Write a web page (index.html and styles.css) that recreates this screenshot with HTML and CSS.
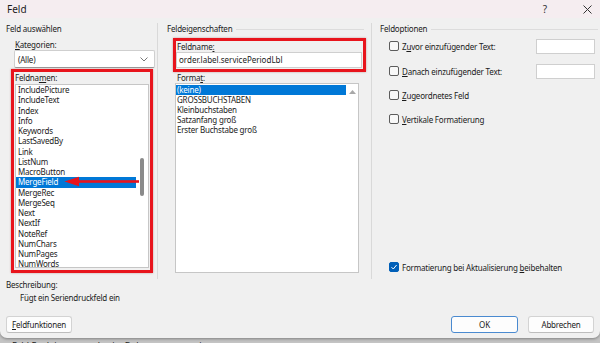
FILE: index.html
```html
<!DOCTYPE html>
<html lang="de">
<head>
  <meta charset="UTF-8" />
  <title>Feld</title>
  <link rel="stylesheet" href="styles.css">
</head>
<body>

  <div class="dialog">
    <!-- title bar -->
    <div class="titlebar">
      <span class="title">Feld</span>
      <span class="help">?</span>
      <span class="close">
        <svg width="9" height="9" viewBox="0 0 9 9"><path d="M0.5 0.5 L8.5 8.5 M8.5 0.5 L0.5 8.5" stroke="#333" stroke-width="1"/></svg>
      </span>
    </div>

    <div class="panes">
      <!-- left: Feld auswaehlen -->
      <section class="pane pane-select">
        <div class="group-title">Feld auswählen</div>
        <div class="label cat-label"><u>K</u>ategorien:</div>
        <div class="combo">
          <span>(Alle)</span>
          <svg width="8" height="5" viewBox="0 0 8 5"><path d="M0.5 0.5 L4 4 L7.5 0.5" fill="none" stroke="#777" stroke-width="1"/></svg>
        </div>
        <div class="red-box names-box">
          <div class="label">Feldna<u>m</u>en:</div>
          <div class="list names-list">
            <ul class="items">
              <li>IncludePicture</li>
              <li>IncludeText</li>
              <li>Index</li>
              <li>Info</li>
              <li>Keywords</li>
              <li>LastSavedBy</li>
              <li>Link</li>
              <li>ListNum</li>
              <li>MacroButton</li>
              <li class="selected">MergeField</li>
              <li>MergeRec</li>
              <li>MergeSeq</li>
              <li>Next</li>
              <li>NextIf</li>
              <li>NoteRef</li>
              <li>NumChars</li>
              <li>NumPages</li>
              <li>NumWords</li>
            </ul>
            <div class="scroll"><div class="thumb"></div></div>
          </div>
          <!-- red pointer arrow drawn over the list -->
          <svg class="pointer" width="76" height="11" viewBox="0 0 76 11">
            <rect x="13" y="4.2" width="62" height="2.6" fill="#e8141c"/>
            <path d="M0.5 5.5 L15 0.8 L15 10.2 Z" fill="#e8141c"/>
          </svg>
        </div>
      </section>

      <!-- middle: Feldeigenschaften -->
      <section class="pane pane-props">
        <div class="group-title">Feldeigenschaften</div>
        <div class="red-box name-box">
          <div class="label">Feldname<u>:</u></div>
          <div class="textbox">order.label.servicePeriodLbl</div>
        </div>
        <div class="label format-label">Forma<u>t</u>:</div>
        <div class="list format-list">
          <ul class="items">
            <li class="selected">(keine)</li>
            <li>GROSSBUCHSTABEN</li>
            <li>Kleinbuchstaben</li>
            <li>Satzanfang groß</li>
            <li>Erster Buchstabe groß</li>
          </ul>
          <div class="scroll">
            <svg width="7" height="4" viewBox="0 0 7 4"><path d="M0 4 L3.5 0 L7 4 Z" fill="#a8a8a8"/></svg>
          </div>
        </div>
      </section>

      <!-- right: Feldoptionen -->
      <section class="pane pane-options">
        <div class="group-title">Feldoptionen</div>
        <div class="option row-1">
          <span class="check"></span>
          <span>Z<u>u</u>vor einzufügender Text:</span>
          <span class="small-input"></span>
        </div>
        <div class="option row-2">
          <span class="check"></span>
          <span><u>D</u>anach einzufügender Text:</span>
          <span class="small-input"></span>
        </div>
        <div class="option row-3">
          <span class="check"></span>
          <span><u>Z</u>ugeordnetes Feld</span>
        </div>
        <div class="option row-4">
          <span class="check"></span>
          <span><u>V</u>ertikale Formatierung</span>
        </div>
        <div class="option row-keep">
          <span class="check checked">
            <svg width="8" height="8" viewBox="0 0 8 8"><path d="M1.5 4.2 L3.3 6 L6.6 2" fill="none" stroke="#fff" stroke-width="1"/></svg>
          </span>
          <span>Formatierung bei Aktualisierung <u>b</u>eibehalten</span>
        </div>
      </section>
    </div>

    <div class="description">
      <div class="label">Beschreibung:</div>
      <div class="desc-text">Fügt ein Seriendruckfeld ein</div>
    </div>

    <div class="buttons">
      <button class="btn btn-codes"><u>F</u>eldfunktionen</button>
      <span class="spacer"></span>
      <button class="btn btn-ok">OK</button>
      <button class="btn">Abbrechen</button>
    </div>
  </div>

  <div class="below">Feld-Funktionen werden im Dokument angezeigt</div>

</body>
</html>
```

FILE: styles.css
```css
body {
  margin: 0;
  width: 600px;
  height: 343px;
  overflow: hidden;
  background-color: #c4c4c4;
  font-family: 'Noto Sans', sans-serif;
  font-size: 8px;
  letter-spacing: -0.2px;
  color: #1b1b1b;
}

ul {
  margin: 0;
  padding: 0;
  list-style: none;
}

u {
  text-decoration-thickness: 1px;
  text-underline-offset: 1px;
}

.dialog {
  height: 338px;
  background-color: #f0f0f0;
  border-radius: 0 0 7px 7px;
  box-shadow: 0 1px 3px rgba(0,0,0,0.35);
  display: flex;
  flex-direction: column;
}

/* title bar */
.titlebar {
  height: 18px;
  background-color: #f5edf0;
  display: flex;
  align-items: center;
}

.titlebar .title {
  margin-left: 7px;
  font-size: 10px;
  letter-spacing: 0;
}

.titlebar .help {
  margin-left: auto;
  font-size: 10px;
  color: #333;
}

.titlebar .close {
  display: flex;
  margin-left: 36px;
  margin-right: 8px;
}

/* three panes */
.panes {
  height: 261px;
  display: flex;
}

.pane {
  margin-top: 5px;
  box-sizing: border-box;
  display: flex;
  flex-direction: column;
}

.pane-select {
  width: 158px;
  border-right: 1px solid #d9d9d9;
}

.pane-props {
  width: 214px;
  border-right: 1px solid #d9d9d9;
}

.pane-options {
  flex: 1;
}

.group-title {
  display: flex;
  align-items: center;
  line-height: 12px;
  height: 12px;
}

.group-title::after {
  content: '';
  flex: 1;
  height: 1px;
  margin-left: 4px;
  background-color: #dcdcdc;
}

.pane-select .group-title {
  padding-left: 6px;
}

.pane-select .group-title::after {
  display: none;
}

.pane-props .group-title {
  padding-left: 9px;
  margin-right: 7px;
}

.pane-options .group-title {
  padding-left: 8px;
  margin-right: 2px;
}

.label {
  line-height: 11px;
}

.cat-label {
  margin: 4px 0 0 15px;
}

.combo {
  margin-left: 14px;
  width: 141px;
  height: 18px;
  box-sizing: border-box;
  background: #fff;
  border: 1px solid #cfcfcf;
  border-bottom-color: #9a9a9a;
  border-radius: 2px;
  display: flex;
  align-items: center;
  justify-content: space-between;
  padding: 0 6px 0 3px;
}

.red-box {
  position: relative;
  box-sizing: border-box;
  border: 3px solid #e8141c;
  box-shadow: 0 0 2px rgba(120,0,0,0.35);
}

.names-box {
  margin: 1px 0 0 11px;
  width: 142px;
  height: 204px;
}

.names-box .label {
  padding-left: 1px;
  line-height: 12px;
}

.list {
  box-sizing: border-box;
  background: #fff;
  border: 1px solid #c6c6c6;
  display: flex;
}

.names-list {
  margin-left: 1px;
  width: 134px;
  height: 184px;
}

.names-list .items {
  width: 120px;
}

.names-list li {
  line-height: 10.25px;
  height: 10.25px;
  padding-left: 2px;
}

.selected {
  background-color: #0078d7;
  color: #fff;
}

.scroll {
  flex: 1;
  display: flex;
  flex-direction: column;
  align-items: center;
}

.thumb {
  margin-top: 73px;
  width: 4px;
  height: 38px;
  border-radius: 2px;
  background-color: #8a8a8a;
}

.pointer {
  position: absolute;
  left: 50px;
  top: 104px;
}

.name-box {
  margin: 3px 0 0 15px;
  width: 193px;
  height: 34px;
}

.name-box .label {
  padding-left: 1px;
}

.textbox {
  width: 186px;
  height: 16px;
  box-sizing: border-box;
  background: #fff;
  border: 1px solid #cfcfcf;
  padding-left: 2px;
  line-height: 14px;
  letter-spacing: 0;
}

.format-label {
  margin-left: 19px;
}

.format-list {
  margin-left: 17px;
  width: 184px;
  height: 190px;
  padding-top: 1px;
}

.format-list .items {
  width: 170px;
}

.format-list li {
  line-height: 10px;
  height: 10px;
  padding-left: 1px;
}

.format-list .scroll {
  padding-top: 5px;
}

/* options */
.option {
  display: flex;
  align-items: center;
  height: 16px;
}

.check {
  width: 10px;
  height: 10px;
  box-sizing: border-box;
  margin: 0 3px 0 17px;
  border: 1px solid #5c5c5c;
  border-radius: 2px;
  background-color: #f8f8f8;
  display: flex;
  align-items: center;
  justify-content: center;
}

.check.checked {
  background-color: #005fb8;
  border-color: #005fb8;
}

.small-input {
  margin-left: auto;
  margin-right: 5px;
  width: 59px;
  height: 15px;
  box-sizing: border-box;
  background: #fff;
  border: 1px solid #cfcfcf;
}

.row-1 { margin-top: 3px; }
.row-2 { margin-top: 9px; }
.row-3 { margin-top: 8px; }
.row-4 { margin-top: 8px; }
.row-keep { margin-top: 132px; }

/* description */
.description {
  padding-left: 6px;
}

.description .label {
  line-height: 12px;
}

.desc-text {
  margin-left: 14px;
  line-height: 13px;
}

.buttons {
  display: flex;
  margin-top: 12px;
  padding: 0 6px;
  gap: 10px;
}

.spacer {
  flex: 1;
}

.btn {
  height: 17px;
  width: 66px;
  padding: 0;
  font-family: 'Noto Sans', sans-serif;
  font-size: 8px;
  letter-spacing: -0.2px;
  color: #1b1b1b;
  background: #fdfdfd;
  border: 1px solid #d3d3d3;
  border-bottom-color: #bdbdbd;
  border-radius: 3px;
}

.btn-ok {
  width: 67px;
  border: 1px solid #4a8ad0;
}

.below {
  margin: 1px 0 0 12px;
  font-size: 9px;
  color: #222;
}
```
